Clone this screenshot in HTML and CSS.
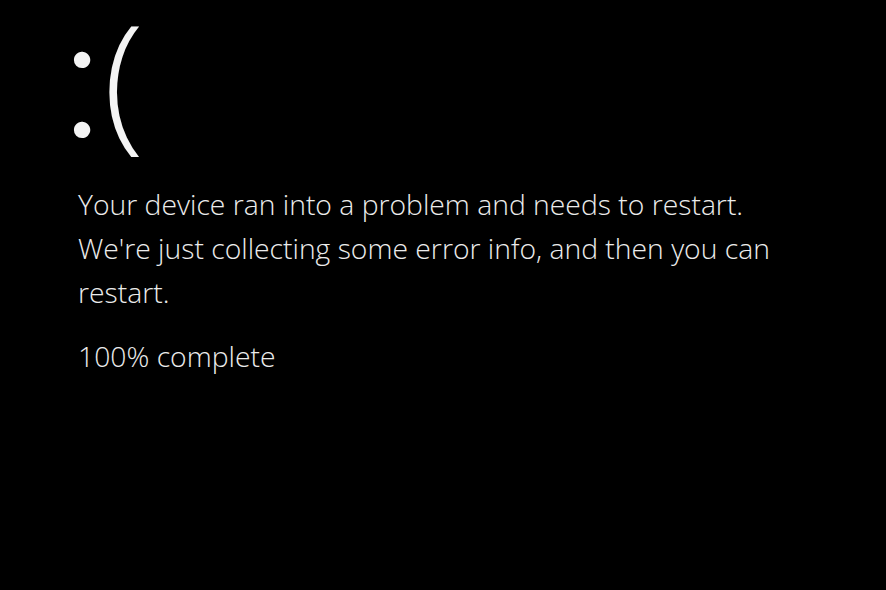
FILE: index.html
```html
<!DOCTYPE html>
<html lang="en">
<head>
<meta charset="utf-8">
<title>Restart</title>
<link rel="stylesheet" href="styles.css">
</head>
<body>
<main class="screen">
  <div class="face"><span class="colon">:</span><span class="paren">(</span></div>
  <p class="message">Your device ran into a problem and needs to restart. We're just collecting some error info, and then you can restart.</p>
  <p class="progress">100% complete</p>
</main>
</body>
</html>
```

FILE: styles.css
```css
html, body {
  margin: 0;
  padding: 0;
  background: #000;
  height: 100%;
}
.screen {
  box-sizing: border-box;
  height: 100%;
  padding: 0 0 0 78px;
  color: #ececec;
  font-family: "Open Sans", "Noto Sans", sans-serif;
  font-weight: 300;
}
.face {
  display: flex;
  align-items: flex-start;
  height: 172px;
  color: #f4f4f4;
}
.colon {
  font-family: Lato, "Open Sans", sans-serif;
  font-size: 176px;
  line-height: 1;
  font-weight: 300;
  margin: -19px 0 0 -17px;
}
.paren {
  font-size: 150px;
  line-height: 1;
  font-weight: 300;
  margin: 0;
}
.message {
  margin: 10px 0 0;
  width: 720px;
  font-size: 28.3px;
  line-height: 44px;
}
.progress {
  margin: 20px 0 0;
  font-size: 28.3px;
  line-height: 44px;
}
```
